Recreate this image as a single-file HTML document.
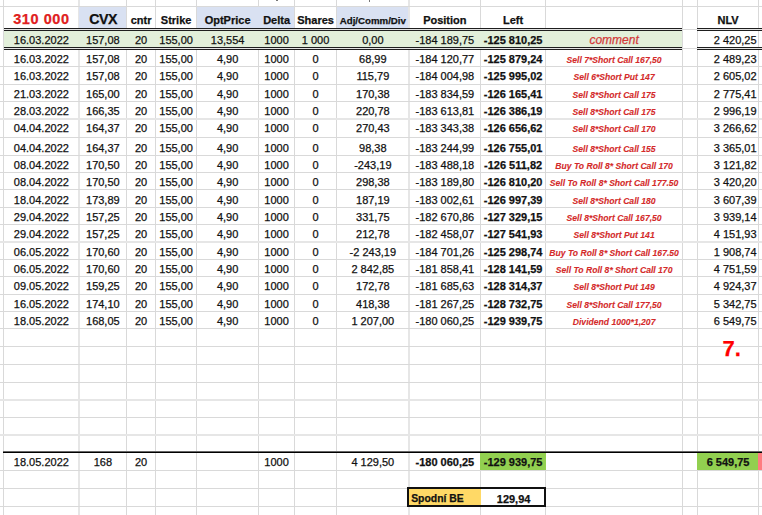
<!DOCTYPE html>
<html><head><meta charset="utf-8"><style>
html,body{margin:0;padding:0;}
body{width:762px;height:515px;overflow:hidden;background:#fff;position:relative;font-family:"Liberation Sans",sans-serif;}
body>div{position:absolute;}
.t{white-space:nowrap;color:#111;overflow:visible;-webkit-text-stroke:0.25px currentColor;}
.b{font-weight:bold;}
.i{font-style:italic;}
.bi{font-weight:bold;font-style:italic;}
</style></head><body>
<div style="left:3px;top:0px;width:1px;height:515px;background:#d9d9d9;"></div>
<div style="left:78px;top:0px;width:2px;height:515px;background:#e6e6e6;"></div>
<div style="left:126px;top:0px;width:1px;height:515px;background:#d9d9d9;"></div>
<div style="left:155px;top:0px;width:1px;height:515px;background:#d9d9d9;"></div>
<div style="left:196px;top:0px;width:1px;height:515px;background:#d9d9d9;"></div>
<div style="left:258px;top:0px;width:1px;height:515px;background:#d9d9d9;"></div>
<div style="left:294px;top:0px;width:1px;height:515px;background:#d9d9d9;"></div>
<div style="left:336px;top:0px;width:1px;height:515px;background:#d9d9d9;"></div>
<div style="left:408px;top:0px;width:2px;height:515px;background:#e6e6e6;"></div>
<div style="left:480px;top:0px;width:1px;height:515px;background:#d9d9d9;"></div>
<div style="left:545px;top:0px;width:1px;height:515px;background:#d9d9d9;"></div>
<div style="left:682px;top:0px;width:1px;height:515px;background:#d9d9d9;"></div>
<div style="left:697px;top:0px;width:1px;height:515px;background:#d9d9d9;"></div>
<div style="left:758px;top:0px;width:1px;height:515px;background:#d9d9d9;"></div>
<div style="left:0px;top:6px;width:762px;height:1px;background:#d9d9d9;"></div>
<div style="left:0px;top:66px;width:762px;height:1px;background:#d9d9d9;"></div>
<div style="left:0px;top:84px;width:762px;height:1px;background:#d9d9d9;"></div>
<div style="left:0px;top:101px;width:762px;height:1px;background:#d9d9d9;"></div>
<div style="left:0px;top:118px;width:762px;height:2px;background:#e6e6e6;"></div>
<div style="left:0px;top:137px;width:762px;height:1px;background:#d9d9d9;"></div>
<div style="left:0px;top:155px;width:762px;height:1px;background:#d9d9d9;"></div>
<div style="left:0px;top:172px;width:762px;height:1px;background:#d9d9d9;"></div>
<div style="left:0px;top:189px;width:762px;height:1px;background:#d9d9d9;"></div>
<div style="left:0px;top:207px;width:762px;height:1px;background:#d9d9d9;"></div>
<div style="left:0px;top:224px;width:762px;height:1px;background:#d9d9d9;"></div>
<div style="left:0px;top:241px;width:762px;height:2px;background:#e6e6e6;"></div>
<div style="left:0px;top:259px;width:762px;height:1px;background:#d9d9d9;"></div>
<div style="left:0px;top:276px;width:762px;height:1px;background:#d9d9d9;"></div>
<div style="left:0px;top:294px;width:762px;height:1px;background:#d9d9d9;"></div>
<div style="left:0px;top:311px;width:762px;height:1px;background:#d9d9d9;"></div>
<div style="left:0px;top:328px;width:762px;height:1px;background:#d9d9d9;"></div>
<div style="left:0px;top:346px;width:762px;height:1px;background:#d9d9d9;"></div>
<div style="left:0px;top:364px;width:762px;height:1px;background:#d9d9d9;"></div>
<div style="left:0px;top:382px;width:762px;height:1px;background:#d9d9d9;"></div>
<div style="left:0px;top:399px;width:762px;height:2px;background:#e6e6e6;"></div>
<div style="left:0px;top:417px;width:762px;height:1px;background:#d9d9d9;"></div>
<div style="left:0px;top:434px;width:762px;height:2px;background:#e6e6e6;"></div>
<div style="left:0px;top:470px;width:762px;height:1px;background:#d9d9d9;"></div>
<div style="left:0px;top:488px;width:762px;height:1px;background:#d9d9d9;"></div>
<div style="left:0px;top:506px;width:762px;height:1px;background:#d9d9d9;"></div>
<div style="left:79px;top:7px;width:47px;height:21px;background:#d9e1f2;"></div>
<div style="left:197px;top:7px;width:97px;height:21px;background:#d9e1f2;"></div>
<div style="left:337px;top:7px;width:71px;height:21px;background:#d9e1f2;"></div>
<div style="left:4px;top:28px;width:678px;height:1px;background:#1e1e1e;"></div>
<div style="left:4px;top:29px;width:678px;height:1px;background:#e4e4e4;"></div>
<div style="left:4px;top:30px;width:678px;height:1px;background:#1e1e1e;"></div>
<div style="left:4px;top:47px;width:678px;height:1px;background:#1e1e1e;"></div>
<div style="left:4px;top:48px;width:678px;height:1px;background:#e4e4e4;"></div>
<div style="left:4px;top:49px;width:678px;height:1px;background:#1e1e1e;"></div>
<div style="left:697px;top:28px;width:65px;height:1px;background:#1e1e1e;"></div>
<div style="left:697px;top:29px;width:65px;height:1px;background:#e4e4e4;"></div>
<div style="left:697px;top:30px;width:65px;height:1px;background:#1e1e1e;"></div>
<div style="left:697px;top:47px;width:65px;height:1px;background:#1e1e1e;"></div>
<div style="left:697px;top:48px;width:65px;height:1px;background:#e4e4e4;"></div>
<div style="left:697px;top:49px;width:65px;height:1px;background:#1e1e1e;"></div>
<div style="left:4px;top:31px;width:678px;height:16px;background:#e2efda;"></div>
<div style="left:683px;top:29px;width:14px;height:1px;background:#d9d9d9;"></div>
<div style="left:683px;top:48px;width:14px;height:1px;background:#d9d9d9;"></div>
<div style="left:3px;top:451px;width:759px;height:1px;background:#666666;"></div>
<div style="left:3px;top:452px;width:759px;height:1px;background:#000000;"></div>
<div style="left:480px;top:453px;width:66px;height:17px;background:#92d050;"></div>
<div style="left:697px;top:453px;width:61px;height:17px;background:#92d050;"></div>
<div style="left:758px;top:453px;width:4px;height:17px;background:#ff7c80;"></div>
<div style="left:409px;top:488px;width:136px;height:18px;background:#ffffff;"></div>
<div style="left:409px;top:488px;width:72px;height:18px;background:#ffd966;"></div>
<div style="left:407px;top:487px;width:139px;height:20px;box-sizing:border-box;border:2px solid #111;"></div>
<div style="left:276px;top:0px;width:2px;height:1px;background:#777;"></div>
<div style="left:369px;top:0px;width:1px;height:2px;background:#777;"></div>
<div class="t b" style="left:3.9px;top:11.98px;width:74.99999999999999px;height:14px;line-height:14px;font-size:14.5px;text-align:center;color:#e02020;letter-spacing:0.55px;">310 000</div>
<div class="t b" style="left:80.19999999999999px;top:12.08px;width:46.0px;height:14px;line-height:14px;font-size:14.2px;text-align:center;letter-spacing:-0.4px;">CVX</div>
<div class="t b" style="left:126.6px;top:13.19px;width:29.0px;height:14px;line-height:14px;font-size:11px;text-align:center;">cntr</div>
<div class="t b" style="left:155.6px;top:13.19px;width:41.0px;height:14px;line-height:14px;font-size:11px;text-align:center;">Strike</div>
<div class="t b" style="left:196.6px;top:13.19px;width:62.00000000000003px;height:14px;line-height:14px;font-size:11px;text-align:center;">OptPrice</div>
<div class="t b" style="left:258.6px;top:13.19px;width:36.0px;height:14px;line-height:14px;font-size:11px;text-align:center;">Delta</div>
<div class="t b" style="left:294.6px;top:13.19px;width:42.0px;height:14px;line-height:14px;font-size:11px;text-align:center;">Shares</div>
<div class="t b" style="left:409.1px;top:13.19px;width:71.5px;height:14px;line-height:14px;font-size:11px;text-align:center;">Position</div>
<div class="t b" style="left:480.6px;top:13.19px;width:65.0px;height:14px;line-height:14px;font-size:11px;text-align:center;">Left</div>
<div class="t b" style="left:697.6px;top:13.19px;width:61.0px;height:14px;line-height:14px;font-size:11px;text-align:center;">NLV</div>
<div class="t b" style="left:336.6px;top:13.64px;width:72.5px;height:14px;line-height:14px;font-size:9.7px;text-align:center;">Adj/Comm/Div</div>
<div class="t r" style="left:3.6px;top:32.89px;width:75.5px;height:14px;line-height:14px;font-size:11px;text-align:center;">16.03.2022</div>
<div class="t r" style="left:79.1px;top:32.89px;width:47.5px;height:14px;line-height:14px;font-size:11px;text-align:center;">157,08</div>
<div class="t r" style="left:126.6px;top:32.89px;width:29.0px;height:14px;line-height:14px;font-size:11px;text-align:center;">20</div>
<div class="t r" style="left:155.6px;top:32.89px;width:41.0px;height:14px;line-height:14px;font-size:11px;text-align:center;">155,00</div>
<div class="t r" style="left:196.6px;top:32.89px;width:62.00000000000003px;height:14px;line-height:14px;font-size:11px;text-align:center;">13,554</div>
<div class="t r" style="left:258.6px;top:32.89px;width:36.0px;height:14px;line-height:14px;font-size:11px;text-align:center;">1000</div>
<div class="t r" style="left:294.6px;top:32.89px;width:42.0px;height:14px;line-height:14px;font-size:11px;text-align:center;">1 000</div>
<div class="t r" style="left:336.6px;top:32.89px;width:72.5px;height:14px;line-height:14px;font-size:11px;text-align:center;">0,00</div>
<div class="t r" style="left:409.1px;top:32.89px;width:71.5px;height:14px;line-height:14px;font-size:11px;text-align:center;">-184 189,75</div>
<div class="t b" style="left:480.6px;top:32.89px;width:65.0px;height:14px;line-height:14px;font-size:11px;text-align:center;">-125 810,25</div>
<div class="t i" style="left:545.6px;top:32.54px;width:137.0px;height:14px;line-height:14px;font-size:12px;text-align:center;color:#d43a3a;">comment</div>
<div class="t r" style="left:697.6px;top:32.89px;width:61.0px;height:14px;line-height:14px;font-size:11px;text-align:right;padding-right:2px;box-sizing:border-box;">2 420,25</div>
<div class="t r" style="left:3.6px;top:52.19px;width:75.5px;height:14px;line-height:14px;font-size:11px;text-align:center;">16.03.2022</div>
<div class="t r" style="left:79.1px;top:52.19px;width:47.5px;height:14px;line-height:14px;font-size:11px;text-align:center;">157,08</div>
<div class="t r" style="left:126.6px;top:52.19px;width:29.0px;height:14px;line-height:14px;font-size:11px;text-align:center;">20</div>
<div class="t r" style="left:155.6px;top:52.19px;width:41.0px;height:14px;line-height:14px;font-size:11px;text-align:center;">155,00</div>
<div class="t r" style="left:196.6px;top:52.19px;width:62.00000000000003px;height:14px;line-height:14px;font-size:11px;text-align:center;">4,90</div>
<div class="t r" style="left:258.6px;top:52.19px;width:36.0px;height:14px;line-height:14px;font-size:11px;text-align:center;">1000</div>
<div class="t r" style="left:294.6px;top:52.19px;width:42.0px;height:14px;line-height:14px;font-size:11px;text-align:center;">0</div>
<div class="t r" style="left:336.6px;top:52.19px;width:72.5px;height:14px;line-height:14px;font-size:11px;text-align:center;">68,99</div>
<div class="t r" style="left:409.1px;top:52.19px;width:71.5px;height:14px;line-height:14px;font-size:11px;text-align:center;">-184 120,77</div>
<div class="t b" style="left:480.6px;top:52.19px;width:65.0px;height:14px;line-height:14px;font-size:11px;text-align:center;">-125 879,24</div>
<div class="t bi" style="left:545.6px;top:53.02px;width:137.0px;height:14px;line-height:14px;font-size:8.6px;text-align:center;color:#d42a2a;-webkit-text-stroke:0.1px currentColor;">Sell 7*Short Call 167,50</div>
<div class="t r" style="left:697.6px;top:52.19px;width:61.0px;height:14px;line-height:14px;font-size:11px;text-align:right;padding-right:2px;box-sizing:border-box;">2 489,23</div>
<div class="t r" style="left:3.6px;top:69.19px;width:75.5px;height:14px;line-height:14px;font-size:11px;text-align:center;">16.03.2022</div>
<div class="t r" style="left:79.1px;top:69.19px;width:47.5px;height:14px;line-height:14px;font-size:11px;text-align:center;">157,08</div>
<div class="t r" style="left:126.6px;top:69.19px;width:29.0px;height:14px;line-height:14px;font-size:11px;text-align:center;">20</div>
<div class="t r" style="left:155.6px;top:69.19px;width:41.0px;height:14px;line-height:14px;font-size:11px;text-align:center;">155,00</div>
<div class="t r" style="left:196.6px;top:69.19px;width:62.00000000000003px;height:14px;line-height:14px;font-size:11px;text-align:center;">4,90</div>
<div class="t r" style="left:258.6px;top:69.19px;width:36.0px;height:14px;line-height:14px;font-size:11px;text-align:center;">1000</div>
<div class="t r" style="left:294.6px;top:69.19px;width:42.0px;height:14px;line-height:14px;font-size:11px;text-align:center;">0</div>
<div class="t r" style="left:336.6px;top:69.19px;width:72.5px;height:14px;line-height:14px;font-size:11px;text-align:center;">115,79</div>
<div class="t r" style="left:409.1px;top:69.19px;width:71.5px;height:14px;line-height:14px;font-size:11px;text-align:center;">-184 004,98</div>
<div class="t b" style="left:480.6px;top:69.19px;width:65.0px;height:14px;line-height:14px;font-size:11px;text-align:center;">-125 995,02</div>
<div class="t bi" style="left:545.6px;top:70.02px;width:137.0px;height:14px;line-height:14px;font-size:8.6px;text-align:center;color:#d42a2a;-webkit-text-stroke:0.1px currentColor;">Sell 6*Short Put 147</div>
<div class="t r" style="left:697.6px;top:69.19px;width:61.0px;height:14px;line-height:14px;font-size:11px;text-align:right;padding-right:2px;box-sizing:border-box;">2 605,02</div>
<div class="t r" style="left:3.6px;top:87.19px;width:75.5px;height:14px;line-height:14px;font-size:11px;text-align:center;">21.03.2022</div>
<div class="t r" style="left:79.1px;top:87.19px;width:47.5px;height:14px;line-height:14px;font-size:11px;text-align:center;">165,00</div>
<div class="t r" style="left:126.6px;top:87.19px;width:29.0px;height:14px;line-height:14px;font-size:11px;text-align:center;">20</div>
<div class="t r" style="left:155.6px;top:87.19px;width:41.0px;height:14px;line-height:14px;font-size:11px;text-align:center;">155,00</div>
<div class="t r" style="left:196.6px;top:87.19px;width:62.00000000000003px;height:14px;line-height:14px;font-size:11px;text-align:center;">4,90</div>
<div class="t r" style="left:258.6px;top:87.19px;width:36.0px;height:14px;line-height:14px;font-size:11px;text-align:center;">1000</div>
<div class="t r" style="left:294.6px;top:87.19px;width:42.0px;height:14px;line-height:14px;font-size:11px;text-align:center;">0</div>
<div class="t r" style="left:336.6px;top:87.19px;width:72.5px;height:14px;line-height:14px;font-size:11px;text-align:center;">170,38</div>
<div class="t r" style="left:409.1px;top:87.19px;width:71.5px;height:14px;line-height:14px;font-size:11px;text-align:center;">-183 834,59</div>
<div class="t b" style="left:480.6px;top:87.19px;width:65.0px;height:14px;line-height:14px;font-size:11px;text-align:center;">-126 165,41</div>
<div class="t bi" style="left:545.6px;top:88.02px;width:137.0px;height:14px;line-height:14px;font-size:8.6px;text-align:center;color:#d42a2a;-webkit-text-stroke:0.1px currentColor;">Sell 8*Short Call 175</div>
<div class="t r" style="left:697.6px;top:87.19px;width:61.0px;height:14px;line-height:14px;font-size:11px;text-align:right;padding-right:2px;box-sizing:border-box;">2 775,41</div>
<div class="t r" style="left:3.6px;top:104.19px;width:75.5px;height:14px;line-height:14px;font-size:11px;text-align:center;">28.03.2022</div>
<div class="t r" style="left:79.1px;top:104.19px;width:47.5px;height:14px;line-height:14px;font-size:11px;text-align:center;">166,35</div>
<div class="t r" style="left:126.6px;top:104.19px;width:29.0px;height:14px;line-height:14px;font-size:11px;text-align:center;">20</div>
<div class="t r" style="left:155.6px;top:104.19px;width:41.0px;height:14px;line-height:14px;font-size:11px;text-align:center;">155,00</div>
<div class="t r" style="left:196.6px;top:104.19px;width:62.00000000000003px;height:14px;line-height:14px;font-size:11px;text-align:center;">4,90</div>
<div class="t r" style="left:258.6px;top:104.19px;width:36.0px;height:14px;line-height:14px;font-size:11px;text-align:center;">1000</div>
<div class="t r" style="left:294.6px;top:104.19px;width:42.0px;height:14px;line-height:14px;font-size:11px;text-align:center;">0</div>
<div class="t r" style="left:336.6px;top:104.19px;width:72.5px;height:14px;line-height:14px;font-size:11px;text-align:center;">220,78</div>
<div class="t r" style="left:409.1px;top:104.19px;width:71.5px;height:14px;line-height:14px;font-size:11px;text-align:center;">-183 613,81</div>
<div class="t b" style="left:480.6px;top:104.19px;width:65.0px;height:14px;line-height:14px;font-size:11px;text-align:center;">-126 386,19</div>
<div class="t bi" style="left:545.6px;top:105.02px;width:137.0px;height:14px;line-height:14px;font-size:8.6px;text-align:center;color:#d42a2a;-webkit-text-stroke:0.1px currentColor;">Sell 8*Short Call 175</div>
<div class="t r" style="left:697.6px;top:104.19px;width:61.0px;height:14px;line-height:14px;font-size:11px;text-align:right;padding-right:2px;box-sizing:border-box;">2 996,19</div>
<div class="t r" style="left:3.6px;top:121.19px;width:75.5px;height:14px;line-height:14px;font-size:11px;text-align:center;">04.04.2022</div>
<div class="t r" style="left:79.1px;top:121.19px;width:47.5px;height:14px;line-height:14px;font-size:11px;text-align:center;">164,37</div>
<div class="t r" style="left:126.6px;top:121.19px;width:29.0px;height:14px;line-height:14px;font-size:11px;text-align:center;">20</div>
<div class="t r" style="left:155.6px;top:121.19px;width:41.0px;height:14px;line-height:14px;font-size:11px;text-align:center;">155,00</div>
<div class="t r" style="left:196.6px;top:121.19px;width:62.00000000000003px;height:14px;line-height:14px;font-size:11px;text-align:center;">4,90</div>
<div class="t r" style="left:258.6px;top:121.19px;width:36.0px;height:14px;line-height:14px;font-size:11px;text-align:center;">1000</div>
<div class="t r" style="left:294.6px;top:121.19px;width:42.0px;height:14px;line-height:14px;font-size:11px;text-align:center;">0</div>
<div class="t r" style="left:336.6px;top:121.19px;width:72.5px;height:14px;line-height:14px;font-size:11px;text-align:center;">270,43</div>
<div class="t r" style="left:409.1px;top:121.19px;width:71.5px;height:14px;line-height:14px;font-size:11px;text-align:center;">-183 343,38</div>
<div class="t b" style="left:480.6px;top:121.19px;width:65.0px;height:14px;line-height:14px;font-size:11px;text-align:center;">-126 656,62</div>
<div class="t bi" style="left:545.6px;top:122.02px;width:137.0px;height:14px;line-height:14px;font-size:8.6px;text-align:center;color:#d42a2a;-webkit-text-stroke:0.1px currentColor;">Sell 8*Short Call 170</div>
<div class="t r" style="left:697.6px;top:121.19px;width:61.0px;height:14px;line-height:14px;font-size:11px;text-align:right;padding-right:2px;box-sizing:border-box;">3 266,62</div>
<div class="t r" style="left:3.6px;top:140.79px;width:75.5px;height:14px;line-height:14px;font-size:11px;text-align:center;">04.04.2022</div>
<div class="t r" style="left:79.1px;top:140.79px;width:47.5px;height:14px;line-height:14px;font-size:11px;text-align:center;">164,37</div>
<div class="t r" style="left:126.6px;top:140.79px;width:29.0px;height:14px;line-height:14px;font-size:11px;text-align:center;">20</div>
<div class="t r" style="left:155.6px;top:140.79px;width:41.0px;height:14px;line-height:14px;font-size:11px;text-align:center;">155,00</div>
<div class="t r" style="left:196.6px;top:140.79px;width:62.00000000000003px;height:14px;line-height:14px;font-size:11px;text-align:center;">4,90</div>
<div class="t r" style="left:258.6px;top:140.79px;width:36.0px;height:14px;line-height:14px;font-size:11px;text-align:center;">1000</div>
<div class="t r" style="left:294.6px;top:140.79px;width:42.0px;height:14px;line-height:14px;font-size:11px;text-align:center;">0</div>
<div class="t r" style="left:336.6px;top:140.79px;width:72.5px;height:14px;line-height:14px;font-size:11px;text-align:center;">98,38</div>
<div class="t r" style="left:409.1px;top:140.79px;width:71.5px;height:14px;line-height:14px;font-size:11px;text-align:center;">-183 244,99</div>
<div class="t b" style="left:480.6px;top:140.79px;width:65.0px;height:14px;line-height:14px;font-size:11px;text-align:center;">-126 755,01</div>
<div class="t bi" style="left:545.6px;top:141.62px;width:137.0px;height:14px;line-height:14px;font-size:8.6px;text-align:center;color:#d42a2a;-webkit-text-stroke:0.1px currentColor;">Sell 8*Short Call 155</div>
<div class="t r" style="left:697.6px;top:140.79px;width:61.0px;height:14px;line-height:14px;font-size:11px;text-align:right;padding-right:2px;box-sizing:border-box;">3 365,01</div>
<div class="t r" style="left:3.6px;top:158.19px;width:75.5px;height:14px;line-height:14px;font-size:11px;text-align:center;">08.04.2022</div>
<div class="t r" style="left:79.1px;top:158.19px;width:47.5px;height:14px;line-height:14px;font-size:11px;text-align:center;">170,50</div>
<div class="t r" style="left:126.6px;top:158.19px;width:29.0px;height:14px;line-height:14px;font-size:11px;text-align:center;">20</div>
<div class="t r" style="left:155.6px;top:158.19px;width:41.0px;height:14px;line-height:14px;font-size:11px;text-align:center;">155,00</div>
<div class="t r" style="left:196.6px;top:158.19px;width:62.00000000000003px;height:14px;line-height:14px;font-size:11px;text-align:center;">4,90</div>
<div class="t r" style="left:258.6px;top:158.19px;width:36.0px;height:14px;line-height:14px;font-size:11px;text-align:center;">1000</div>
<div class="t r" style="left:294.6px;top:158.19px;width:42.0px;height:14px;line-height:14px;font-size:11px;text-align:center;">0</div>
<div class="t r" style="left:336.6px;top:158.19px;width:72.5px;height:14px;line-height:14px;font-size:11px;text-align:center;">-243,19</div>
<div class="t r" style="left:409.1px;top:158.19px;width:71.5px;height:14px;line-height:14px;font-size:11px;text-align:center;">-183 488,18</div>
<div class="t b" style="left:480.6px;top:158.19px;width:65.0px;height:14px;line-height:14px;font-size:11px;text-align:center;">-126 511,82</div>
<div class="t bi" style="left:545.6px;top:159.02px;width:137.0px;height:14px;line-height:14px;font-size:8.6px;text-align:center;color:#d42a2a;-webkit-text-stroke:0.1px currentColor;">Buy To Roll 8* Short Call 170</div>
<div class="t r" style="left:697.6px;top:158.19px;width:61.0px;height:14px;line-height:14px;font-size:11px;text-align:right;padding-right:2px;box-sizing:border-box;">3 121,82</div>
<div class="t r" style="left:3.6px;top:175.19px;width:75.5px;height:14px;line-height:14px;font-size:11px;text-align:center;">08.04.2022</div>
<div class="t r" style="left:79.1px;top:175.19px;width:47.5px;height:14px;line-height:14px;font-size:11px;text-align:center;">170,50</div>
<div class="t r" style="left:126.6px;top:175.19px;width:29.0px;height:14px;line-height:14px;font-size:11px;text-align:center;">20</div>
<div class="t r" style="left:155.6px;top:175.19px;width:41.0px;height:14px;line-height:14px;font-size:11px;text-align:center;">155,00</div>
<div class="t r" style="left:196.6px;top:175.19px;width:62.00000000000003px;height:14px;line-height:14px;font-size:11px;text-align:center;">4,90</div>
<div class="t r" style="left:258.6px;top:175.19px;width:36.0px;height:14px;line-height:14px;font-size:11px;text-align:center;">1000</div>
<div class="t r" style="left:294.6px;top:175.19px;width:42.0px;height:14px;line-height:14px;font-size:11px;text-align:center;">0</div>
<div class="t r" style="left:336.6px;top:175.19px;width:72.5px;height:14px;line-height:14px;font-size:11px;text-align:center;">298,38</div>
<div class="t r" style="left:409.1px;top:175.19px;width:71.5px;height:14px;line-height:14px;font-size:11px;text-align:center;">-183 189,80</div>
<div class="t b" style="left:480.6px;top:175.19px;width:65.0px;height:14px;line-height:14px;font-size:11px;text-align:center;">-126 810,20</div>
<div class="t bi" style="left:545.6px;top:176.02px;width:137.0px;height:14px;line-height:14px;font-size:8.6px;text-align:center;color:#d42a2a;-webkit-text-stroke:0.1px currentColor;">Sell To Roll 8* Short Call 177.50</div>
<div class="t r" style="left:697.6px;top:175.19px;width:61.0px;height:14px;line-height:14px;font-size:11px;text-align:right;padding-right:2px;box-sizing:border-box;">3 420,20</div>
<div class="t r" style="left:3.6px;top:193.19px;width:75.5px;height:14px;line-height:14px;font-size:11px;text-align:center;">18.04.2022</div>
<div class="t r" style="left:79.1px;top:193.19px;width:47.5px;height:14px;line-height:14px;font-size:11px;text-align:center;">173,89</div>
<div class="t r" style="left:126.6px;top:193.19px;width:29.0px;height:14px;line-height:14px;font-size:11px;text-align:center;">20</div>
<div class="t r" style="left:155.6px;top:193.19px;width:41.0px;height:14px;line-height:14px;font-size:11px;text-align:center;">155,00</div>
<div class="t r" style="left:196.6px;top:193.19px;width:62.00000000000003px;height:14px;line-height:14px;font-size:11px;text-align:center;">4,90</div>
<div class="t r" style="left:258.6px;top:193.19px;width:36.0px;height:14px;line-height:14px;font-size:11px;text-align:center;">1000</div>
<div class="t r" style="left:294.6px;top:193.19px;width:42.0px;height:14px;line-height:14px;font-size:11px;text-align:center;">0</div>
<div class="t r" style="left:336.6px;top:193.19px;width:72.5px;height:14px;line-height:14px;font-size:11px;text-align:center;">187,19</div>
<div class="t r" style="left:409.1px;top:193.19px;width:71.5px;height:14px;line-height:14px;font-size:11px;text-align:center;">-183 002,61</div>
<div class="t b" style="left:480.6px;top:193.19px;width:65.0px;height:14px;line-height:14px;font-size:11px;text-align:center;">-126 997,39</div>
<div class="t bi" style="left:545.6px;top:194.02px;width:137.0px;height:14px;line-height:14px;font-size:8.6px;text-align:center;color:#d42a2a;-webkit-text-stroke:0.1px currentColor;">Sell 8*Short Call 180</div>
<div class="t r" style="left:697.6px;top:193.19px;width:61.0px;height:14px;line-height:14px;font-size:11px;text-align:right;padding-right:2px;box-sizing:border-box;">3 607,39</div>
<div class="t r" style="left:3.6px;top:210.19px;width:75.5px;height:14px;line-height:14px;font-size:11px;text-align:center;">29.04.2022</div>
<div class="t r" style="left:79.1px;top:210.19px;width:47.5px;height:14px;line-height:14px;font-size:11px;text-align:center;">157,25</div>
<div class="t r" style="left:126.6px;top:210.19px;width:29.0px;height:14px;line-height:14px;font-size:11px;text-align:center;">20</div>
<div class="t r" style="left:155.6px;top:210.19px;width:41.0px;height:14px;line-height:14px;font-size:11px;text-align:center;">155,00</div>
<div class="t r" style="left:196.6px;top:210.19px;width:62.00000000000003px;height:14px;line-height:14px;font-size:11px;text-align:center;">4,90</div>
<div class="t r" style="left:258.6px;top:210.19px;width:36.0px;height:14px;line-height:14px;font-size:11px;text-align:center;">1000</div>
<div class="t r" style="left:294.6px;top:210.19px;width:42.0px;height:14px;line-height:14px;font-size:11px;text-align:center;">0</div>
<div class="t r" style="left:336.6px;top:210.19px;width:72.5px;height:14px;line-height:14px;font-size:11px;text-align:center;">331,75</div>
<div class="t r" style="left:409.1px;top:210.19px;width:71.5px;height:14px;line-height:14px;font-size:11px;text-align:center;">-182 670,86</div>
<div class="t b" style="left:480.6px;top:210.19px;width:65.0px;height:14px;line-height:14px;font-size:11px;text-align:center;">-127 329,15</div>
<div class="t bi" style="left:545.6px;top:211.02px;width:137.0px;height:14px;line-height:14px;font-size:8.6px;text-align:center;color:#d42a2a;-webkit-text-stroke:0.1px currentColor;">Sell 8*Short Call 167,50</div>
<div class="t r" style="left:697.6px;top:210.19px;width:61.0px;height:14px;line-height:14px;font-size:11px;text-align:right;padding-right:2px;box-sizing:border-box;">3 939,14</div>
<div class="t r" style="left:3.6px;top:227.19px;width:75.5px;height:14px;line-height:14px;font-size:11px;text-align:center;">29.04.2022</div>
<div class="t r" style="left:79.1px;top:227.19px;width:47.5px;height:14px;line-height:14px;font-size:11px;text-align:center;">157,25</div>
<div class="t r" style="left:126.6px;top:227.19px;width:29.0px;height:14px;line-height:14px;font-size:11px;text-align:center;">20</div>
<div class="t r" style="left:155.6px;top:227.19px;width:41.0px;height:14px;line-height:14px;font-size:11px;text-align:center;">155,00</div>
<div class="t r" style="left:196.6px;top:227.19px;width:62.00000000000003px;height:14px;line-height:14px;font-size:11px;text-align:center;">4,90</div>
<div class="t r" style="left:258.6px;top:227.19px;width:36.0px;height:14px;line-height:14px;font-size:11px;text-align:center;">1000</div>
<div class="t r" style="left:294.6px;top:227.19px;width:42.0px;height:14px;line-height:14px;font-size:11px;text-align:center;">0</div>
<div class="t r" style="left:336.6px;top:227.19px;width:72.5px;height:14px;line-height:14px;font-size:11px;text-align:center;">212,78</div>
<div class="t r" style="left:409.1px;top:227.19px;width:71.5px;height:14px;line-height:14px;font-size:11px;text-align:center;">-182 458,07</div>
<div class="t b" style="left:480.6px;top:227.19px;width:65.0px;height:14px;line-height:14px;font-size:11px;text-align:center;">-127 541,93</div>
<div class="t bi" style="left:545.6px;top:228.02px;width:137.0px;height:14px;line-height:14px;font-size:8.6px;text-align:center;color:#d42a2a;-webkit-text-stroke:0.1px currentColor;">Sell 8*Short Put 141</div>
<div class="t r" style="left:697.6px;top:227.19px;width:61.0px;height:14px;line-height:14px;font-size:11px;text-align:right;padding-right:2px;box-sizing:border-box;">4 151,93</div>
<div class="t r" style="left:3.6px;top:245.19px;width:75.5px;height:14px;line-height:14px;font-size:11px;text-align:center;">06.05.2022</div>
<div class="t r" style="left:79.1px;top:245.19px;width:47.5px;height:14px;line-height:14px;font-size:11px;text-align:center;">170,60</div>
<div class="t r" style="left:126.6px;top:245.19px;width:29.0px;height:14px;line-height:14px;font-size:11px;text-align:center;">20</div>
<div class="t r" style="left:155.6px;top:245.19px;width:41.0px;height:14px;line-height:14px;font-size:11px;text-align:center;">155,00</div>
<div class="t r" style="left:196.6px;top:245.19px;width:62.00000000000003px;height:14px;line-height:14px;font-size:11px;text-align:center;">4,90</div>
<div class="t r" style="left:258.6px;top:245.19px;width:36.0px;height:14px;line-height:14px;font-size:11px;text-align:center;">1000</div>
<div class="t r" style="left:294.6px;top:245.19px;width:42.0px;height:14px;line-height:14px;font-size:11px;text-align:center;">0</div>
<div class="t r" style="left:336.6px;top:245.19px;width:72.5px;height:14px;line-height:14px;font-size:11px;text-align:center;">-2 243,19</div>
<div class="t r" style="left:409.1px;top:245.19px;width:71.5px;height:14px;line-height:14px;font-size:11px;text-align:center;">-184 701,26</div>
<div class="t b" style="left:480.6px;top:245.19px;width:65.0px;height:14px;line-height:14px;font-size:11px;text-align:center;">-125 298,74</div>
<div class="t bi" style="left:545.6px;top:246.02px;width:137.0px;height:14px;line-height:14px;font-size:8.6px;text-align:center;color:#d42a2a;-webkit-text-stroke:0.1px currentColor;">Buy To Roll 8* Short Call 167.50</div>
<div class="t r" style="left:697.6px;top:245.19px;width:61.0px;height:14px;line-height:14px;font-size:11px;text-align:right;padding-right:2px;box-sizing:border-box;">1 908,74</div>
<div class="t r" style="left:3.6px;top:262.19px;width:75.5px;height:14px;line-height:14px;font-size:11px;text-align:center;">06.05.2022</div>
<div class="t r" style="left:79.1px;top:262.19px;width:47.5px;height:14px;line-height:14px;font-size:11px;text-align:center;">170,60</div>
<div class="t r" style="left:126.6px;top:262.19px;width:29.0px;height:14px;line-height:14px;font-size:11px;text-align:center;">20</div>
<div class="t r" style="left:155.6px;top:262.19px;width:41.0px;height:14px;line-height:14px;font-size:11px;text-align:center;">155,00</div>
<div class="t r" style="left:196.6px;top:262.19px;width:62.00000000000003px;height:14px;line-height:14px;font-size:11px;text-align:center;">4,90</div>
<div class="t r" style="left:258.6px;top:262.19px;width:36.0px;height:14px;line-height:14px;font-size:11px;text-align:center;">1000</div>
<div class="t r" style="left:294.6px;top:262.19px;width:42.0px;height:14px;line-height:14px;font-size:11px;text-align:center;">0</div>
<div class="t r" style="left:336.6px;top:262.19px;width:72.5px;height:14px;line-height:14px;font-size:11px;text-align:center;">2 842,85</div>
<div class="t r" style="left:409.1px;top:262.19px;width:71.5px;height:14px;line-height:14px;font-size:11px;text-align:center;">-181 858,41</div>
<div class="t b" style="left:480.6px;top:262.19px;width:65.0px;height:14px;line-height:14px;font-size:11px;text-align:center;">-128 141,59</div>
<div class="t bi" style="left:545.6px;top:263.02px;width:137.0px;height:14px;line-height:14px;font-size:8.6px;text-align:center;color:#d42a2a;-webkit-text-stroke:0.1px currentColor;">Sell To Roll 8* Short Call 170</div>
<div class="t r" style="left:697.6px;top:262.19px;width:61.0px;height:14px;line-height:14px;font-size:11px;text-align:right;padding-right:2px;box-sizing:border-box;">4 751,59</div>
<div class="t r" style="left:3.6px;top:279.19px;width:75.5px;height:14px;line-height:14px;font-size:11px;text-align:center;">09.05.2022</div>
<div class="t r" style="left:79.1px;top:279.19px;width:47.5px;height:14px;line-height:14px;font-size:11px;text-align:center;">159,25</div>
<div class="t r" style="left:126.6px;top:279.19px;width:29.0px;height:14px;line-height:14px;font-size:11px;text-align:center;">20</div>
<div class="t r" style="left:155.6px;top:279.19px;width:41.0px;height:14px;line-height:14px;font-size:11px;text-align:center;">155,00</div>
<div class="t r" style="left:196.6px;top:279.19px;width:62.00000000000003px;height:14px;line-height:14px;font-size:11px;text-align:center;">4,90</div>
<div class="t r" style="left:258.6px;top:279.19px;width:36.0px;height:14px;line-height:14px;font-size:11px;text-align:center;">1000</div>
<div class="t r" style="left:294.6px;top:279.19px;width:42.0px;height:14px;line-height:14px;font-size:11px;text-align:center;">0</div>
<div class="t r" style="left:336.6px;top:279.19px;width:72.5px;height:14px;line-height:14px;font-size:11px;text-align:center;">172,78</div>
<div class="t r" style="left:409.1px;top:279.19px;width:71.5px;height:14px;line-height:14px;font-size:11px;text-align:center;">-181 685,63</div>
<div class="t b" style="left:480.6px;top:279.19px;width:65.0px;height:14px;line-height:14px;font-size:11px;text-align:center;">-128 314,37</div>
<div class="t bi" style="left:545.6px;top:280.02px;width:137.0px;height:14px;line-height:14px;font-size:8.6px;text-align:center;color:#d42a2a;-webkit-text-stroke:0.1px currentColor;">Sell 8*Short Put 149</div>
<div class="t r" style="left:697.6px;top:279.19px;width:61.0px;height:14px;line-height:14px;font-size:11px;text-align:right;padding-right:2px;box-sizing:border-box;">4 924,37</div>
<div class="t r" style="left:3.6px;top:297.19px;width:75.5px;height:14px;line-height:14px;font-size:11px;text-align:center;">16.05.2022</div>
<div class="t r" style="left:79.1px;top:297.19px;width:47.5px;height:14px;line-height:14px;font-size:11px;text-align:center;">174,10</div>
<div class="t r" style="left:126.6px;top:297.19px;width:29.0px;height:14px;line-height:14px;font-size:11px;text-align:center;">20</div>
<div class="t r" style="left:155.6px;top:297.19px;width:41.0px;height:14px;line-height:14px;font-size:11px;text-align:center;">155,00</div>
<div class="t r" style="left:196.6px;top:297.19px;width:62.00000000000003px;height:14px;line-height:14px;font-size:11px;text-align:center;">4,90</div>
<div class="t r" style="left:258.6px;top:297.19px;width:36.0px;height:14px;line-height:14px;font-size:11px;text-align:center;">1000</div>
<div class="t r" style="left:294.6px;top:297.19px;width:42.0px;height:14px;line-height:14px;font-size:11px;text-align:center;">0</div>
<div class="t r" style="left:336.6px;top:297.19px;width:72.5px;height:14px;line-height:14px;font-size:11px;text-align:center;">418,38</div>
<div class="t r" style="left:409.1px;top:297.19px;width:71.5px;height:14px;line-height:14px;font-size:11px;text-align:center;">-181 267,25</div>
<div class="t b" style="left:480.6px;top:297.19px;width:65.0px;height:14px;line-height:14px;font-size:11px;text-align:center;">-128 732,75</div>
<div class="t bi" style="left:545.6px;top:298.02px;width:137.0px;height:14px;line-height:14px;font-size:8.6px;text-align:center;color:#d42a2a;-webkit-text-stroke:0.1px currentColor;">Sell 8*Short Call 177,50</div>
<div class="t r" style="left:697.6px;top:297.19px;width:61.0px;height:14px;line-height:14px;font-size:11px;text-align:right;padding-right:2px;box-sizing:border-box;">5 342,75</div>
<div class="t r" style="left:3.6px;top:314.19px;width:75.5px;height:14px;line-height:14px;font-size:11px;text-align:center;">18.05.2022</div>
<div class="t r" style="left:79.1px;top:314.19px;width:47.5px;height:14px;line-height:14px;font-size:11px;text-align:center;">168,05</div>
<div class="t r" style="left:126.6px;top:314.19px;width:29.0px;height:14px;line-height:14px;font-size:11px;text-align:center;">20</div>
<div class="t r" style="left:155.6px;top:314.19px;width:41.0px;height:14px;line-height:14px;font-size:11px;text-align:center;">155,00</div>
<div class="t r" style="left:196.6px;top:314.19px;width:62.00000000000003px;height:14px;line-height:14px;font-size:11px;text-align:center;">4,90</div>
<div class="t r" style="left:258.6px;top:314.19px;width:36.0px;height:14px;line-height:14px;font-size:11px;text-align:center;">1000</div>
<div class="t r" style="left:294.6px;top:314.19px;width:42.0px;height:14px;line-height:14px;font-size:11px;text-align:center;">0</div>
<div class="t r" style="left:336.6px;top:314.19px;width:72.5px;height:14px;line-height:14px;font-size:11px;text-align:center;">1 207,00</div>
<div class="t r" style="left:409.1px;top:314.19px;width:71.5px;height:14px;line-height:14px;font-size:11px;text-align:center;">-180 060,25</div>
<div class="t b" style="left:480.6px;top:314.19px;width:65.0px;height:14px;line-height:14px;font-size:11px;text-align:center;">-129 939,75</div>
<div class="t bi" style="left:545.6px;top:315.02px;width:137.0px;height:14px;line-height:14px;font-size:8.6px;text-align:center;color:#d42a2a;-webkit-text-stroke:0.1px currentColor;">Dividend 1000*1,207</div>
<div class="t r" style="left:697.6px;top:314.19px;width:61.0px;height:14px;line-height:14px;font-size:11px;text-align:right;padding-right:2px;box-sizing:border-box;">6 549,75</div>
<div class="t b" style="left:704.6px;top:341.88px;width:54.0px;height:14px;line-height:14px;font-size:22px;text-align:center;color:#ff0000;">7.</div>
<div class="t r" style="left:3.6px;top:455.19px;width:75.5px;height:14px;line-height:14px;font-size:11px;text-align:center;">18.05.2022</div>
<div class="t r" style="left:79.1px;top:455.19px;width:47.5px;height:14px;line-height:14px;font-size:11px;text-align:center;">168</div>
<div class="t r" style="left:126.6px;top:455.19px;width:29.0px;height:14px;line-height:14px;font-size:11px;text-align:center;">20</div>
<div class="t r" style="left:258.6px;top:455.19px;width:36.0px;height:14px;line-height:14px;font-size:11px;text-align:center;">1000</div>
<div class="t r" style="left:336.6px;top:455.19px;width:72.5px;height:14px;line-height:14px;font-size:11px;text-align:center;">4 129,50</div>
<div class="t b" style="left:409.1px;top:455.19px;width:71.5px;height:14px;line-height:14px;font-size:11px;text-align:center;">-180 060,25</div>
<div class="t b" style="left:480.6px;top:455.19px;width:65.0px;height:14px;line-height:14px;font-size:11px;text-align:center;">-129 939,75</div>
<div class="t b" style="left:697.6px;top:455.19px;width:61.0px;height:14px;line-height:14px;font-size:11px;text-align:center;">6 549,75</div>
<div class="t b" style="left:411.20000000000005px;top:491.90px;width:70.39999999999998px;height:14px;line-height:14px;font-size:10.4px;text-align:left;">Spodní BE</div>
<div class="t b" style="left:481.6px;top:491.69px;width:64.0px;height:14px;line-height:14px;font-size:11px;text-align:center;">129,94</div>
</body></html>
